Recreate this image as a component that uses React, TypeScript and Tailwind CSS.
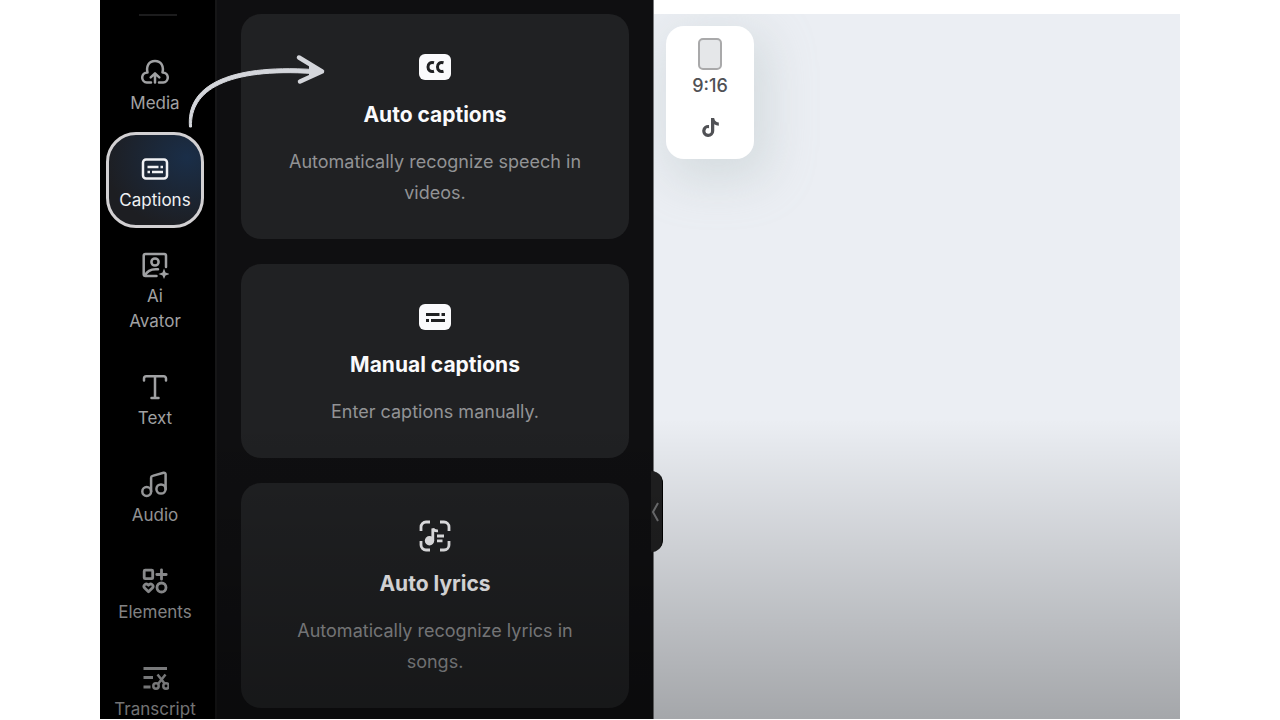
import type { ReactNode } from "react";
import { FaTiktok } from "react-icons/fa6";

const stroke = {
  fill: "none",
  stroke: "currentColor",
  strokeWidth: 2.5,
  strokeLinecap: "round" as const,
  strokeLinejoin: "round" as const,
};

const MediaIcon = () => (
  <svg width="28" height="28" viewBox="0 0 28 28" {...stroke}>
    <path d="M10 24.500H5.800A5.100 5.100 0 0 1 1.200 19.500c0-2.900 2.200-5 5.300-5.100C5 8 7.800 3 14 3S23 8 21.500 14.400c3.100.100 5.300 2.200 5.300 5.100a5.100 5.100 0 0 1-4.600 5H18" />
    <path d="M14 24.500v-8.500M9.700 19.300L14 15.300l4.300 4" />
  </svg>
);

const CaptionsIcon = () => (
  <svg width="28" height="28" viewBox="0 0 28 28" {...stroke}>
    <rect x="2" y="4.500" width="24" height="19" rx="3" />
    <path strokeLinecap="butt" d="M6.500 12h11M19.500 12h2.500M6.500 17h2.500M11 17h11" />
  </svg>
);

const AvatarIcon = () => (
  <svg width="28" height="28" viewBox="0 0 28 28" {...stroke}>
    <path d="M15.500 25H4.500A1.800 1.800 0 0 1 2.700 23.200V4.800A1.800 1.800 0 0 1 4.500 3h18.700A1.800 1.800 0 0 1 25 4.800v11.200" />
    <circle cx="14" cy="11" r="3.600" />
    <path d="M4 24.500c2-4.500 7-6.800 13-6.200" />
    <path fill="currentColor" stroke="none" d="M23 17.500l1.500 4 4 1.500-4 1.500L23 28l-1.500-3.500-4-1.500 4-1.500z" />
  </svg>
);

const TextIcon = () => (
  <svg width="28" height="28" viewBox="0 0 28 28" {...stroke}>
    <path d="M3 7.500V5.500A2.300 2.300 0 0 1 5.300 3.200h17.400A2.300 2.300 0 0 1 25 5.500V7.500M14 3.200V25M10.500 25h7" />
  </svg>
);

const AudioIcon = () => (
  <svg width="28" height="28" viewBox="0 0 28 28" {...stroke}>
    <circle cx="5.700" cy="21.500" r="4.400" />
    <circle cx="20" cy="19" r="4.600" />
    <path d="M10.100 21.500V7.800a2 2 0 0 1 1.500-1.900l11-3.100a1.600 1.600 0 0 1 2 1.500V19" />
  </svg>
);

const ElementsIcon = () => (
  <svg width="28" height="28" viewBox="0 0 28 28" {...stroke} strokeWidth="2.800">
    <rect x="3.200" y="3.200" width="8.500" height="8.500" rx="1" />
    <path d="M20.500 2.800v9.400M15.800 7.500h9.400" />
    <circle cx="20.500" cy="20.500" r="4.500" />
    <path d="M7.500 24.800L3.400 20.700C1.800 18.500 5 15.200 7.500 18.200c2.500-3 5.700.300 4.100 2.500z" />
  </svg>
);

const TranscriptIcon = () => (
  <svg width="28" height="28" viewBox="0 0 28 28" {...stroke} strokeLinecap="butt">
    <path d="M2.500 4.500H26M2.500 13.500H12M2.500 23H9.500" strokeWidth="2.800" />
    <path d="M16.500 10.500L24 20M24.500 10.500L17 20" />
    <circle cx="15" cy="22" r="2.700" />
    <circle cx="25" cy="22" r="2.700" />
  </svg>
);

const AutoCaptionsIcon = () => (
  <svg width="32" height="32" viewBox="0 0 32 32" fill="none">
    <rect y="3" width="32" height="26" rx="6" fill="#fafafc" />
    <path d="M15 11.800C11.500 10.800 9 12.500 9 16s2.500 5.200 6 4.200M24.500 11.800c-3.500-1-6 .700-6 4.200s2.500 5.200 6 4.200" stroke="#202123" strokeWidth="3" />
  </svg>
);

const ManualCaptionsIcon = () => (
  <svg width="32" height="32" viewBox="0 0 32 32" fill="none">
    <rect y="3" width="32" height="26" rx="6" fill="#fafafc" />
    <path d="M7 13.500h13.500M22.500 13.500h3.500M7 19.500h3M12 19.500h14" stroke="#202123" strokeWidth="3" />
  </svg>
);

const AutoLyricsIcon = () => (
  <svg width="32" height="32" viewBox="0 0 32 32" fill="none" stroke="#f2f2f4" strokeWidth="2.800">
    <path d="M2 11V7a5 5 0 0 1 5-5h4M21 2h4a5 5 0 0 1 5 5v4M30 21v4a5 5 0 0 1-5 5h-4M11 30H7a5 5 0 0 1-5-5v-4" />
    <circle cx="10.500" cy="20.800" r="4.700" fill="#f2f2f4" stroke="none" />
    <path d="M13.800 20.500V8.500c.800 2.200 2.800 2.500 5.200 2.300M18 16h7M18 20.800h5.500" />
  </svg>
);

const navItems: { label: string; icon: ReactNode; active?: boolean }[] = [
  { label: "Media", icon: <MediaIcon /> },
  { label: "Captions", icon: <CaptionsIcon />, active: true },
  { label: "Ai Avator", icon: <AvatarIcon /> },
  { label: "Text", icon: <TextIcon /> },
  { label: "Audio", icon: <AudioIcon /> },
  { label: "Elements", icon: <ElementsIcon /> },
  { label: "Transcript", icon: <TranscriptIcon /> },
];

const cards = [
  { title: "Auto captions", text: "Automatically recognize speech in videos.", icon: <AutoCaptionsIcon /> },
  { title: "Manual captions", text: "Enter captions manually.", icon: <ManualCaptionsIcon /> },
  { title: "Auto lyrics", text: "Automatically recognize lyrics in songs.", icon: <AutoLyricsIcon /> },
];

function Sidebar() {
  return (
    <nav className="w-[117px] shrink-0 bg-black border-r-2 border-[#161617] px-1.5 overflow-hidden">
      <div className="h-[35px] pt-3.5">
        <hr className="w-[38px] mx-auto border-t-2 border-[#1c1c1d]" />
      </div>
      {navItems.map((item) => (
        <button
          key={item.label}
          type="button"
          className={
            item.active
              ? "flex flex-col items-center w-[98px] h-24 pt-5 gap-[5px] rounded-[30px] border-3 border-[#d2d0d2] bg-radial-[at_85%_25%] from-[#1a2e48] to-[#1d1e22] to-75% text-[#f0f1f4] text-[17px] leading-[25px]"
              : "flex flex-col items-center w-[98px] pt-[23px] pb-4 gap-[5px] text-[#a0a1a3] text-[17px] leading-[25px]"
          }
        >
          {item.icon}
          <span className={item.label === "Ai Avator" ? "w-14" : ""}>{item.label}</span>
        </button>
      ))}
    </nav>
  );
}

function CaptionPanel() {
  return (
    <section className="relative z-10 w-[437px] shrink-0 bg-[#0f0f11] border-r border-[#77787a] pt-3.5 px-6">
      <div className="flex flex-col gap-[25px]">
        {cards.map((card) => (
          <button key={card.title} type="button" className="flex flex-col items-center rounded-[20px] bg-[#202123] px-9 pt-[37px] pb-[31px] text-center">
            {card.icon}
            <span className="mt-[18px] text-[21px] leading-7 font-bold text-[#fafafc]">{card.title}</span>
            <span className="mt-[17px] text-lg leading-[31px] text-[#929395]">{card.text}</span>
          </button>
        ))}
      </div>
      <button
        type="button"
        aria-label="Collapse panel"
        className="absolute -right-2.5 top-[471px] w-3 h-[81px] flex items-center rounded-r-[12px] bg-[#202021] border-r border-black text-[#707173]"
      >
        <svg width="10" height="20" viewBox="0 0 10 20" fill="none" stroke="currentColor" strokeWidth="2">
          <path d="M7 1L2 10l5 9" />
        </svg>
      </button>
    </section>
  );
}

function Canvas() {
  return (
    <main className="flex-1 min-w-0 flex flex-col bg-white pt-3.5">
      <div className="flex-1 overflow-hidden bg-[#ebeef3] pt-3 pl-3">
        <button type="button" className="w-[88px] h-[133px] flex flex-col items-center rounded-[18px] bg-white pt-3 text-[#505155] shadow-[8px_14px_45px_8px_rgba(175,190,190,0.35)]">
          <span className="w-6 h-8 rounded-[5px] border-2 border-[#a9a9aa] bg-[#e5e7e9]" />
          <span className="mt-1 text-lg leading-6 font-medium">9:16</span>
          <FaTiktok size={19} className="mt-5" />
        </button>
      </div>
    </main>
  );
}

function Pointer() {
  return (
    <svg className="absolute z-20 left-[85px] top-[50px] pointer-events-none" width="144" height="82" viewBox="0 0 144 82" fill="none">
      <path d="M4.500 77C1 37 41 14 128 19.500L128 23.500C42 18 5 40 6.500 77Z" fill="#d4d6db" stroke="#d4d6db" strokeLinejoin="round" />
      <path d="M114 7.500L137 21.500L115 31.500" stroke="#d4d6db" strokeWidth="4.500" strokeLinecap="round" strokeLinejoin="round" />
      <path d="M124 15l15 6.500L124 27.500z" fill="#d4d6db" />
    </svg>
  );
}

export default function App() {
  return (
    <div className="h-screen bg-white px-[100px] pb-px font-['Inter',sans-serif]">
      <div className="relative h-full flex overflow-hidden">
        <Sidebar />
        <CaptionPanel />
        <Canvas />
        <Pointer />
        <div className="absolute z-30 inset-x-0 bottom-0 h-[300px] bg-linear-to-b from-transparent to-black/30 pointer-events-none" />
      </div>
    </div>
  );
}
